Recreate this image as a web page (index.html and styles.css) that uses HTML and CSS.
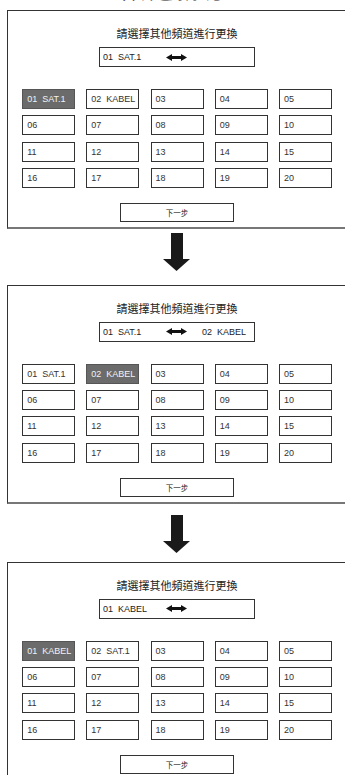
FILE: index.html
```html
<!DOCTYPE html>
<html lang="zh-Hant">
<head>
    <meta charset="UTF-8">
    <meta name="viewport" content="width=device-width, initial-scale=1.0">
    <title>頻道排序</title>
    <link rel="stylesheet" href="styles.css">
</head>
<body>
    <h1 class="page-title">頻道排序</h1>

    <!-- Step 1 -->
    <section class="panel">
        <p class="panel-title">請選擇其他頻道進行更換</p>
        <div class="swap-box">
            <span class="swap-from">01&nbsp;&nbsp;SAT.1</span>
            <svg class="swap-arrow" width="21" height="7" viewBox="0 0 21 7"><polygon points="0,3.5 6,0 6,2 15,2 15,0 21,3.5 15,7 15,5 6,5 6,7" fill="#111"/></svg>
        </div>
        <div class="channel-grid">
            <div class="channel selected">01&nbsp;&nbsp;SAT.1</div>
            <div class="channel">02&nbsp;&nbsp;KABEL</div>
            <div class="channel">03</div>
            <div class="channel">04</div>
            <div class="channel">05</div>
            <div class="channel">06</div>
            <div class="channel">07</div>
            <div class="channel">08</div>
            <div class="channel">09</div>
            <div class="channel">10</div>
            <div class="channel">11</div>
            <div class="channel">12</div>
            <div class="channel">13</div>
            <div class="channel">14</div>
            <div class="channel">15</div>
            <div class="channel">16</div>
            <div class="channel">17</div>
            <div class="channel">18</div>
            <div class="channel">19</div>
            <div class="channel">20</div>
        </div>
        <button class="next-button" type="button">下一步</button>
    </section>

    <svg class="step-arrow" width="27" height="38" viewBox="0 0 27 38"><rect x="8" y="0" width="12" height="27" fill="#1a1a1a"/><polygon points="0,26 27,26 13.5,38" fill="#1a1a1a"/></svg>

    <!-- Step 2 -->
    <section class="panel">
        <p class="panel-title">請選擇其他頻道進行更換</p>
        <div class="swap-box">
            <span class="swap-from">01&nbsp;&nbsp;SAT.1</span>
            <svg class="swap-arrow" width="21" height="7" viewBox="0 0 21 7"><polygon points="0,3.5 6,0 6,2 15,2 15,0 21,3.5 15,7 15,5 6,5 6,7" fill="#111"/></svg>
            <span class="swap-to">02&nbsp;&nbsp;KABEL</span>
        </div>
        <div class="channel-grid">
            <div class="channel">01&nbsp;&nbsp;SAT.1</div>
            <div class="channel selected">02&nbsp;&nbsp;KABEL</div>
            <div class="channel">03</div>
            <div class="channel">04</div>
            <div class="channel">05</div>
            <div class="channel">06</div>
            <div class="channel">07</div>
            <div class="channel">08</div>
            <div class="channel">09</div>
            <div class="channel">10</div>
            <div class="channel">11</div>
            <div class="channel">12</div>
            <div class="channel">13</div>
            <div class="channel">14</div>
            <div class="channel">15</div>
            <div class="channel">16</div>
            <div class="channel">17</div>
            <div class="channel">18</div>
            <div class="channel">19</div>
            <div class="channel">20</div>
        </div>
        <button class="next-button" type="button">下一步</button>
    </section>

    <svg class="step-arrow step-arrow-late" width="27" height="38" viewBox="0 0 27 38"><rect x="8" y="0" width="12" height="27" fill="#1a1a1a"/><polygon points="0,26 27,26 13.5,38" fill="#1a1a1a"/></svg>

    <!-- Step 3 -->
    <section class="panel">
        <p class="panel-title">請選擇其他頻道進行更換</p>
        <div class="swap-box">
            <span class="swap-from">01&nbsp;&nbsp;KABEL</span>
            <svg class="swap-arrow" width="21" height="7" viewBox="0 0 21 7"><polygon points="0,3.5 6,0 6,2 15,2 15,0 21,3.5 15,7 15,5 6,5 6,7" fill="#111"/></svg>
        </div>
        <div class="channel-grid">
            <div class="channel selected">01&nbsp;&nbsp;KABEL</div>
            <div class="channel">02&nbsp;&nbsp;SAT.1</div>
            <div class="channel">03</div>
            <div class="channel">04</div>
            <div class="channel">05</div>
            <div class="channel">06</div>
            <div class="channel">07</div>
            <div class="channel">08</div>
            <div class="channel">09</div>
            <div class="channel">10</div>
            <div class="channel">11</div>
            <div class="channel">12</div>
            <div class="channel">13</div>
            <div class="channel">14</div>
            <div class="channel">15</div>
            <div class="channel">16</div>
            <div class="channel">17</div>
            <div class="channel">18</div>
            <div class="channel">19</div>
            <div class="channel">20</div>
        </div>
        <button class="next-button" type="button">下一步</button>
    </section>
</body>
</html>
```

FILE: styles.css
```css
html {
    overflow: hidden;
}

body {
    font-family: "Liberation Sans", "Noto Sans CJK TC", Arial, sans-serif;
    background-color: #ffffff;
    color: #222;
    margin: 0;
    padding: 0;
}

/* only the lower edge of the heading shows above the first panel */
.page-title {
    font-family: "Noto Sans CJK TC", sans-serif;
    font-size: 24px;
    line-height: 24px;
    font-weight: bold;
    letter-spacing: 4px;
    text-align: center;
    width: 340px;
    margin: -24px 0 10px 7px;
}

.panel {
    box-sizing: border-box;
    width: 340px;
    margin-left: 7px;
    padding: 15px 0 5px 0;
    border: 1px solid #333;
    border-bottom: 2px solid #777;
    display: flex;
    flex-direction: column;
    align-items: center;
}

.panel-title {
    font-family: "Noto Sans CJK TC", sans-serif;
    font-size: 11px;
    line-height: 14px;
    color: #222;
    margin: 0;
}

.swap-box {
    box-sizing: border-box;
    width: 156px;
    height: 20px;
    margin-top: 7px;
    padding-left: 3px;
    border: 1px solid #333;
    display: flex;
    align-items: center;
    font-size: 9px;
    color: #222;
}

.swap-from {
    width: 63px;
}

.swap-arrow {
    display: block;
    flex-shrink: 0;
}

.swap-to {
    margin-left: 15px;
}

.channel-grid {
    display: grid;
    grid-template-columns: repeat(5, 53px);
    grid-auto-rows: 20px;
    column-gap: 11.2px;
    row-gap: 6.3px;
    margin-top: 22px;
}

.channel {
    box-sizing: border-box;
    border: 1px solid #333;
    padding-left: 4px;
    display: flex;
    align-items: center;
    font-size: 9px;
    color: #333;
    white-space: nowrap;
}

.channel.selected {
    background-color: #6b6b6b;
    border-color: #555;
    color: #f2f2f2;
}

.next-button {
    box-sizing: border-box;
    width: 114px;
    height: 19px;
    margin-top: 15px;
    padding: 0;
    background-color: #ffffff;
    border: 1px solid #333;
    border-radius: 0;
    font-family: "Noto Sans CJK TC", sans-serif;
    font-size: 7.5px;
    color: #222;
}

.step-arrow {
    display: block;
    margin: 4px 0 14px 163px;
}

.step-arrow-late {
    margin-top: 11px;
    margin-bottom: 9px;
}
```
